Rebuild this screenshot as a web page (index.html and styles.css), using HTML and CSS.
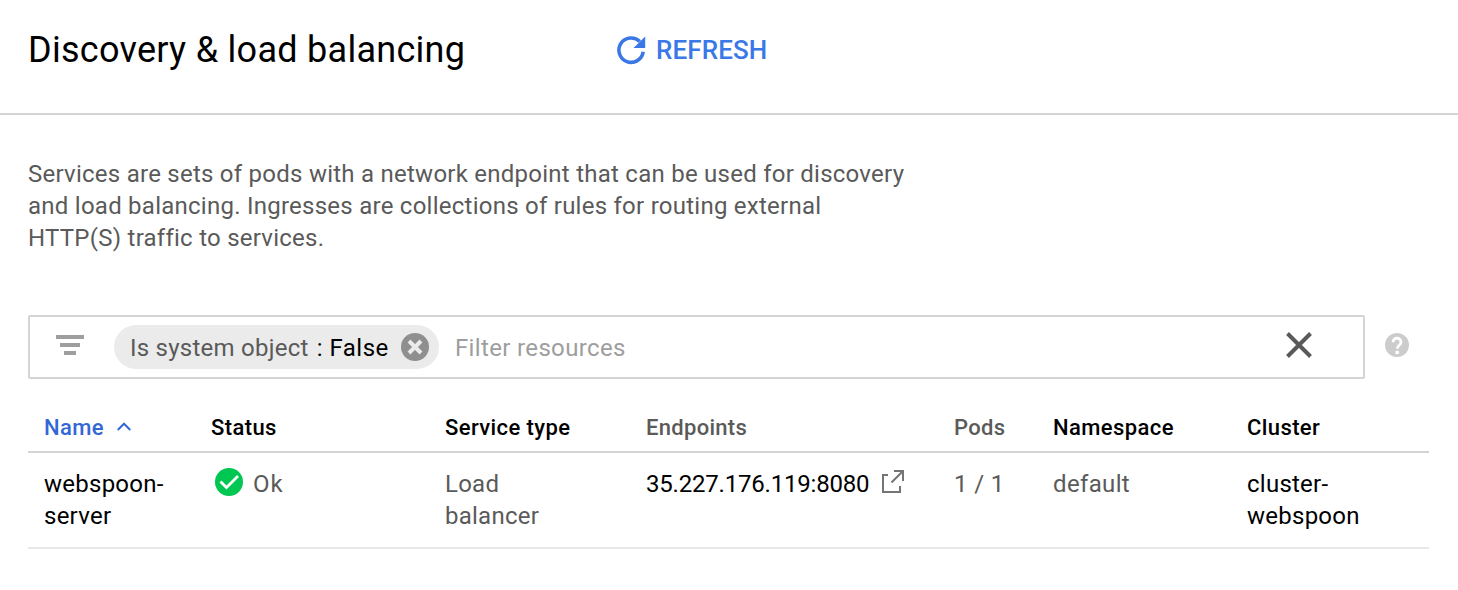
FILE: index.html
```html
<!DOCTYPE html>
<html lang="en">
<head>
<meta charset="utf-8">
<title>Discovery &amp; load balancing</title>
<link rel="stylesheet" href="styles.css">
</head>
<body>
<header class="header">
  <h1 class="title">Discovery &amp; load balancing</h1>
  <button class="refresh">
    <svg class="refresh-icon" viewBox="0 0 28 28"><path d="M26.200 15.800A12.200 12.200 0 1 1 22.800 5.600" fill="none" stroke="currentColor" stroke-width="3.600"/><path fill="currentColor" d="M28.200 .5V12H16.500z"/></svg>
    <span>REFRESH</span>
  </button>
</header>
<main class="content">
  <p class="intro">Services are sets of pods with a network endpoint that can be used for discovery<br>and load balancing. Ingresses are collections of rules for routing external<br>HTTP(S) traffic to services.</p>
  <div class="filter-row">
    <div class="filter">
      <svg class="filter-icon" viewBox="0 0 28 20"><path fill="#9e9e9e" d="M0 0h28v4H0zM4 8h20v4H4zM8 16h12v4H8z"/></svg>
      <div class="chip">
        <span class="chip-key">Is system object</span><span class="chip-value">: False</span>
        <svg class="chip-close" viewBox="0 0 28 28"><circle cx="14" cy="14" r="14" fill="#8f8f8f"/><path d="M8 8l12 12M20 8L8 20" stroke="#ebebeb" stroke-width="4"/></svg>
      </div>
      <span class="placeholder">Filter resources</span>
      <svg class="clear" viewBox="0 0 28 28"><path d="M2.500 2.500l23 23M25.500 2.500l-23 23" stroke="#5a5a5a" stroke-width="4"/></svg>
    </div>
    <svg class="help" viewBox="0 0 24 24"><circle cx="12" cy="12" r="12" fill="#ccc"/><path d="M8 9.200C8 3.900 16 3.900 16 9.200c0 3-3.800 3.200-3.800 6.600" fill="none" stroke="#fff" stroke-width="2.800"/><circle cx="12.200" cy="19.400" r="1.900" fill="#fff"/></svg>
  </div>
  <table class="services">
    <colgroup><col class="c-name"><col class="c-status"><col class="c-type"><col class="c-endpoint"><col class="c-pods"><col class="c-namespace"><col></colgroup>
    <thead>
      <tr>
        <th class="sorted">Name<svg class="sort" viewBox="0 0 14 9"><path d="M.7 8L7 1.700 13.300 8" fill="none" stroke="currentColor" stroke-width="2"/></svg></th>
        <th>Status</th><th>Service type</th><th class="plain">Endpoints</th><th class="plain">Pods</th><th>Namespace</th><th>Cluster</th>
      </tr>
    </thead>
    <tbody>
      <tr>
        <td class="link">webspoon-<br>server</td>
        <td><span class="status"><svg class="ok" viewBox="0 0 28 28"><circle cx="14" cy="14" r="14" fill="#00c752"/><path d="M5.500 13.500l6 6L23 8" fill="none" stroke="#fff" stroke-width="2.800"/></svg>Ok</span></td>
        <td>Load<br>balancer</td>
        <td class="link endpoint">35.227.176.119:8080<svg class="external" viewBox="0 0 24 24"><path d="M7 5H2v17h17v-6M13 1h9v10M22 1L10.500 12.500" fill="none" stroke="#757575" stroke-width="2"/></svg></td>
        <td class="wide">1 / 1</td>
        <td class="wide">default</td>
        <td class="link">cluster-<br>webspoon</td>
      </tr>
    </tbody>
  </table>
</main>
</body>
</html>
```
FILE: styles.css
```css
* { box-sizing: border-box; }
body { margin: 0; background: #fff; color: #5a5a5a; font: 24px/32px Roboto, sans-serif; letter-spacing: .25px; }
svg { flex: none; }
.header { display: flex; align-items: center; height: 115px; padding: 0 28px 13px; border-bottom: 2px solid #d4d4d4; }
.title { width: 589px; margin: 0; color: #000; font-size: 36px; font-weight: 400; line-height: 44px; letter-spacing: .28px; }
.refresh { display: flex; align-items: center; gap: 11px; padding: 0; border: 0; background: none; color: #3b78e7; font: 500 26px/32px Roboto, sans-serif; letter-spacing: .1px; }
.refresh-icon { width: 28px; height: 28px; overflow: visible; }
.content { padding: 43px 28px 0; }
.intro { margin: 0; }
.filter-row { display: flex; align-items: center; gap: 20px; margin-top: 61px; }
.filter { display: flex; align-items: center; width: 1337px; height: 64px; padding: 0 50px 0 26px; border: 2px solid #d4d4d4; border-radius: 2px; }
.filter-icon { width: 28px; height: 20px; margin-bottom: 4px; }
.chip { display: flex; align-items: center; width: 325px; height: 44px; margin-left: 30px; padding: 0 10px 0 16px; border-radius: 22px; background: #ebebeb; }
.chip-key, .chip-value, .placeholder { padding-top: 2px; }
.chip-value { margin-left: 8px; color: #000; letter-spacing: .5px; }
.chip-close { width: 28px; height: 28px; margin-left: auto; }
.placeholder { margin-left: 16px; color: #9e9e9e; letter-spacing: .35px; }
.clear { width: 28px; height: 28px; margin: 0 0 4px auto; }
.help { width: 24px; height: 24px; margin-bottom: 4px; }
.services { width: 1401px; margin-top: 20px; border-collapse: collapse; table-layout: fixed; }
.services th { height: 53px; padding: 6px 0 0; border-bottom: 2px solid #d4d4d4; color: #000; font-size: 22px; font-weight: 500; letter-spacing: .4px; text-align: left; }
.services td { height: 96px; padding: 15px 0 0; border-bottom: 2px solid #e8e8e8; vertical-align: top; }
.services th:first-child, .services td:first-child { padding-left: 16px; }
.services .sorted { color: #3367d6; }
.services .plain { color: #5a5a5a; letter-spacing: .3px; }
.services .link { color: #000; }
.services .endpoint { letter-spacing: -.2px; }
.services .wide { letter-spacing: .35px; }
.sort { width: 14px; height: 9px; margin: 0 0 4px 13px; }
.status { display: flex; align-items: center; gap: 10px; padding-left: 4px; letter-spacing: 1px; }
.ok { width: 28px; height: 28px; margin: 0 0 4px; }
.external { width: 24px; height: 24px; margin-left: 12px; vertical-align: -2px; }
.c-name { width: 183px; }
.c-status { width: 234px; }
.c-type { width: 201px; }
.c-endpoint { width: 308px; }
.c-pods { width: 99px; }
.c-namespace { width: 194px; }
```
